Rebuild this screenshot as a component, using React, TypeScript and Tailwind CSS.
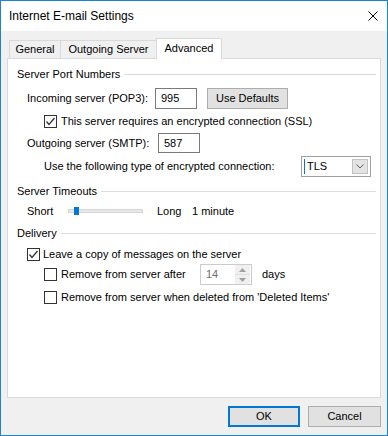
import React from "react";

const Check = ({ checked }: { checked?: boolean }) => (
  <div className="w-[13px] h-[13px] border border-[#333333] bg-white flex items-center justify-center shrink-0">
    {checked && (
      <svg width="11" height="11" viewBox="0 0 11 11">
        <path d="M1.5 5.5 L4 8.5 L9.5 2" fill="none" stroke="#333333" strokeWidth="1.3" />
      </svg>
    )}
  </div>
);

const GroupHeader = ({ label, mt }: { label: string; mt: string }) => (
  <div className={`flex items-center h-[14px] ${mt}`}>
    <span className="whitespace-nowrap">{label}</span>
    <div className="flex-1 h-px bg-[#dcdcdc] ml-[4px]" />
  </div>
);

export default function App() {
  return (
    <div
      className="w-[388px] h-[436px] border border-[#1883d7] flex flex-col bg-[#f0f0f0] text-black"
      style={{ fontFamily: '"Liberation Sans", Arial, sans-serif' }}
    >
      <div className="h-[30px] bg-white flex items-center justify-between pl-[8px] pr-[9px] shrink-0">
        <span className="text-[12px]">Internet E-mail Settings</span>
        <svg width="10" height="10" viewBox="0 0 10 10">
          <path d="M0.5 0.5 L9.5 9.5 M9.5 0.5 L0.5 9.5" stroke="#000" strokeWidth="1" />
        </svg>
      </div>
      <div className="flex-1 flex flex-col px-[6px] pt-[7px] text-[11px]">
        <div className="flex items-end pl-[2px]">
          <div className="w-[52px] h-[18px] border-l border-t border-r border-[#d9d9d9] flex items-center justify-center">
            General
          </div>
          <div className="w-[95px] h-[18px] border-t border-[#d9d9d9] flex items-center justify-center">
            Outgoing Server
          </div>
          <div className="relative z-10 w-[66px] h-[21px] -mb-px border-l border-t border-r border-[#d9d9d9] bg-white flex items-center justify-center pb-[2px]">
            Advanced
          </div>
        </div>
        <div className="h-[340px] border border-[#d9d9d9] bg-white pl-[9px] pr-[4px] pt-[8px] flex flex-col">
          <GroupHeader label="Server Port Numbers" mt="" />
          <div className="flex items-center h-[21px] mt-[7px] pl-[10px]">
            <span className="w-[128px]">Incoming server (POP3):</span>
            <div className="w-[42px] h-[21px] border border-[#7a7a7a] flex items-center pl-[5px]">995</div>
            <div className="ml-[10px] w-[81px] h-[21px] border border-[#adadad] bg-[#e1e1e1] flex items-center justify-center">
              Use Defaults
            </div>
          </div>
          <div className="flex items-center h-[13px] mt-[6px] pl-[27px]">
            <Check checked />
            <span className="ml-[4px]">This server requires an encrypted connection (SSL)</span>
          </div>
          <div className="flex items-center h-[20px] mt-[5px] pl-[10px]">
            <span className="w-[131px]">Outgoing server (SMTP):</span>
            <div className="w-[42px] h-[20px] border border-[#7a7a7a] flex items-center pl-[5px]">587</div>
          </div>
          <div className="flex items-center h-[21px] mt-[3px] pl-[27px]">
            <span className="w-[257px]">Use the following type of encrypted connection:</span>
            <div className="w-[70px] h-[21px] border border-[#a0a0a0] flex items-center pl-[2px] pr-[2px]">
              <div className="w-px h-[15px] bg-[#0078d7]" />
              <span className="ml-[2px] flex-1">TLS</span>
              <div className="w-[16px] h-[15px] border border-[#c2c2c2] bg-[#e3e3e3] flex items-center justify-center">
                <svg width="8" height="5" viewBox="0 0 8 5">
                  <path d="M0.5 0.5 L4 4 L7.5 0.5" fill="none" stroke="#606060" strokeWidth="1" />
                </svg>
              </div>
            </div>
          </div>
          <GroupHeader label="Server Timeouts" mt="mt-[7px]" />
          <div className="flex items-center h-[14px] mt-[6px] pl-[10px]">
            <span className="w-[41px]">Short</span>
            <div className="relative w-[75px] h-[4px] border border-[#d6d6d6] bg-[#e7e7e7]">
              <div className="absolute left-[5px] top-[-3px] w-[5px] h-[8px] bg-[#0078d7]" />
            </div>
            <span className="ml-[14px] w-[35px]">Long</span>
            <span>1 minute</span>
          </div>
          <GroupHeader label="Delivery" mt="mt-[8px]" />
          <div className="flex items-center h-[13px] mt-[8px] pl-[10px]">
            <Check checked />
            <span className="ml-[3px]">Leave a copy of messages on the server</span>
          </div>
          <div className="flex items-center h-[21px] mt-[3px] pl-[27px]">
            <Check />
            <span className="ml-[4px] w-[139px]">Remove from server after</span>
            <div className="w-[52px] h-[21px] border border-[#cccccc] flex items-center">
              <span className="flex-1 pl-[5px] text-[#6d6d6d]">14</span>
              <div className="w-[15px] h-[19px] flex flex-col mr-px">
                <div className="flex-1 bg-[#f0f0f0] border-b border-[#e0e0e0] flex items-center justify-center">
                  <svg width="7" height="4" viewBox="0 0 7 4">
                    <path d="M0 4 L3.5 0 L7 4 Z" fill="#a0a0a0" />
                  </svg>
                </div>
                <div className="flex-1 bg-[#f0f0f0] flex items-center justify-center">
                  <svg width="7" height="4" viewBox="0 0 7 4">
                    <path d="M0 0 L3.5 4 L7 0 Z" fill="#a0a0a0" />
                  </svg>
                </div>
              </div>
            </div>
            <span className="ml-[10px]">days</span>
          </div>
          <div className="flex items-center h-[13px] mt-[6px] pl-[27px]">
            <Check />
            <span className="ml-[4px]">Remove from server when deleted from 'Deleted Items'</span>
          </div>
        </div>
        <div className="flex justify-end gap-[8px] mt-[8px]">
          <div className="w-[72px] h-[21px] border-2 border-[#0078d7] bg-[#e1e1e1] flex items-center justify-center">
            OK
          </div>
          <div className="w-[73px] h-[21px] border border-[#adadad] bg-[#e1e1e1] flex items-center justify-center">
            Cancel
          </div>
        </div>
      </div>
    </div>
  );
}
